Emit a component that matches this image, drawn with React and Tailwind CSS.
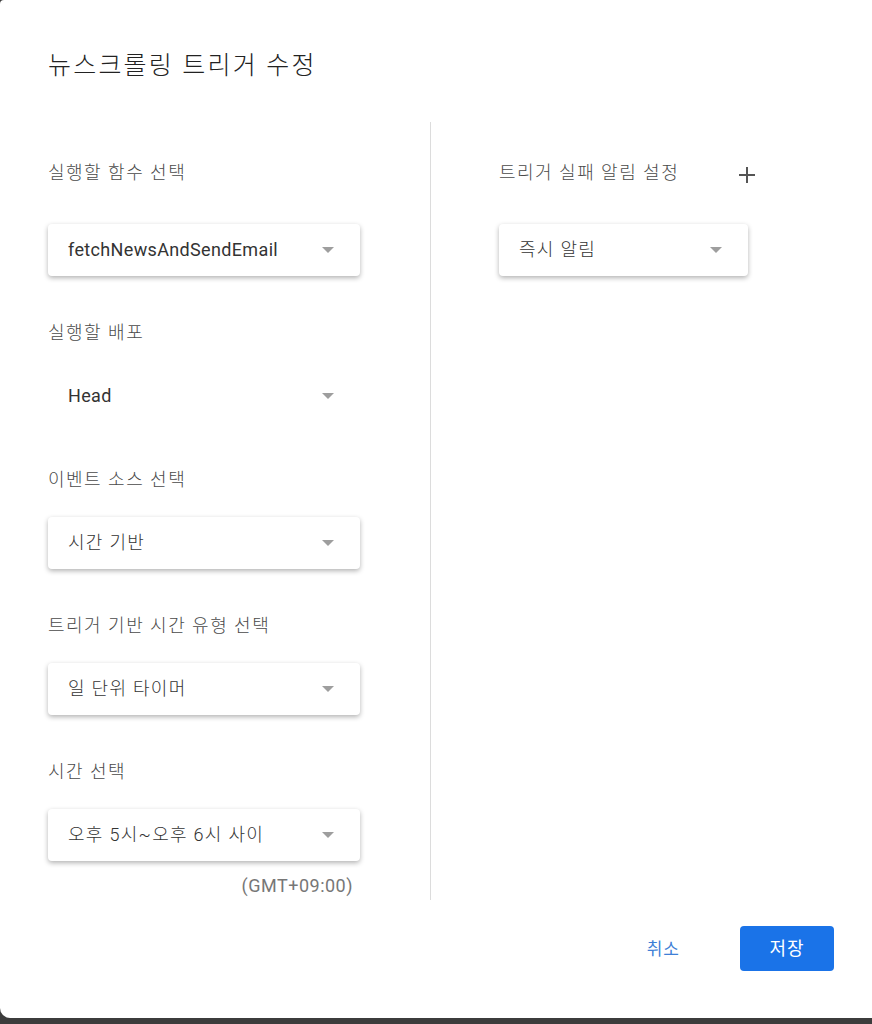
import React from "react";

const FONT = { fontFamily: "Roboto, 'Noto Sans CJK KR', 'Noto Sans', sans-serif" };

function Arrow() {
  return (
    <svg width="12" height="6" viewBox="0 0 12 6" className="shrink-0">
      <path d="M0 0 L12 0 L6 6 Z" fill="#9e9e9e" />
    </svg>
  );
}

function Select({ value, width = "w-[312px]", flat = false, korean = true }) {
  return (
    <div
      className={`${width} h-[52px] flex items-center justify-between pl-[20px] pr-[26px] rounded-[4px] bg-white ${
        flat ? "" : "shadow-[0_2px_5px_rgba(0,0,0,0.3)]"
      }`}
    >
      <span
        className={`text-[18px] leading-[24px] text-[#333] ${
          korean ? "tracking-[1.3px] font-light" : "tracking-[0.35px]"
        }`}
      >
        {value}
      </span>
      <Arrow />
    </div>
  );
}

function Label({ children }) {
  return (
    <div className="text-[18px] leading-[24px] text-[#4a4a4a] tracking-[1.5px] font-light">
      {children}
    </div>
  );
}

export default function App() {
  return (
    <div className="w-[872px] h-[1024px] bg-[#3c3c3c]" style={FONT}>
      <div className="w-full h-[1018px] bg-white rounded-tl-[4px] rounded-bl-[10px] flex flex-col">
        <div className="pt-[50px] pl-[48px] text-[25px] leading-[32px] text-[#222] tracking-[2.2px] font-light">
          뉴스크롤링 트리거 수정
        </div>
        <div className="flex mt-[40px]">
          <div className="w-[431px] h-[778px] border-r border-[#dcdcdc] pl-[48px] pt-[39px] flex flex-col">
            <Label>실행할 함수 선택</Label>
            <div className="mt-[39px]">
              <Select value="fetchNewsAndSendEmail" korean={false} />
            </div>
            <div className="mt-[45px]">
              <Label>실행할 배포</Label>
            </div>
            <div className="mt-[25px]">
              <Select value="Head" flat korean={false} />
            </div>
            <div className="mt-[46px]">
              <Label>이벤트 소스 선택</Label>
            </div>
            <div className="mt-[25px]">
              <Select value="시간 기반" />
            </div>
            <div className="mt-[45px]">
              <Label>트리거 기반 시간 유형 선택</Label>
            </div>
            <div className="mt-[25px]">
              <Select value="일 단위 타이머" />
            </div>
            <div className="mt-[45px]">
              <Label>시간 선택</Label>
            </div>
            <div className="mt-[25px]">
              <Select value="오후 5시~오후 6시 사이" />
            </div>
            <div className="w-[312px] pr-[7px] mt-[14px] text-right text-[18px] leading-[22px] tracking-[0.5px] text-[#777]">
              (GMT+09:00)
            </div>
          </div>
          <div className="flex-1 pl-[68px] pt-[39px] flex flex-col">
            <div className="flex items-center">
              <Label>트리거 실패 알림 설정</Label>
              <svg width="18" height="18" viewBox="0 0 18 18" className="ml-[59px] mt-[3px]">
                <path d="M9 1 V17 M1 9 H17" stroke="#555" strokeWidth="2" />
              </svg>
            </div>
            <div className="mt-[39px]">
              <Select value="즉시 알림" width="w-[249px]" />
            </div>
          </div>
        </div>
        <div className="flex justify-end items-center mt-[26px] pr-[38px]">
          <button className="text-[17px] leading-[24px] text-[#3f7fd6] tracking-[1px] px-[12px] mr-[48px]">
            취소
          </button>
          <button className="w-[94px] h-[45px] rounded-[4px] bg-[#1a73e8] text-white text-[18px] leading-[24px] tracking-[1px]">
            저장
          </button>
        </div>
      </div>
    </div>
  );
}
